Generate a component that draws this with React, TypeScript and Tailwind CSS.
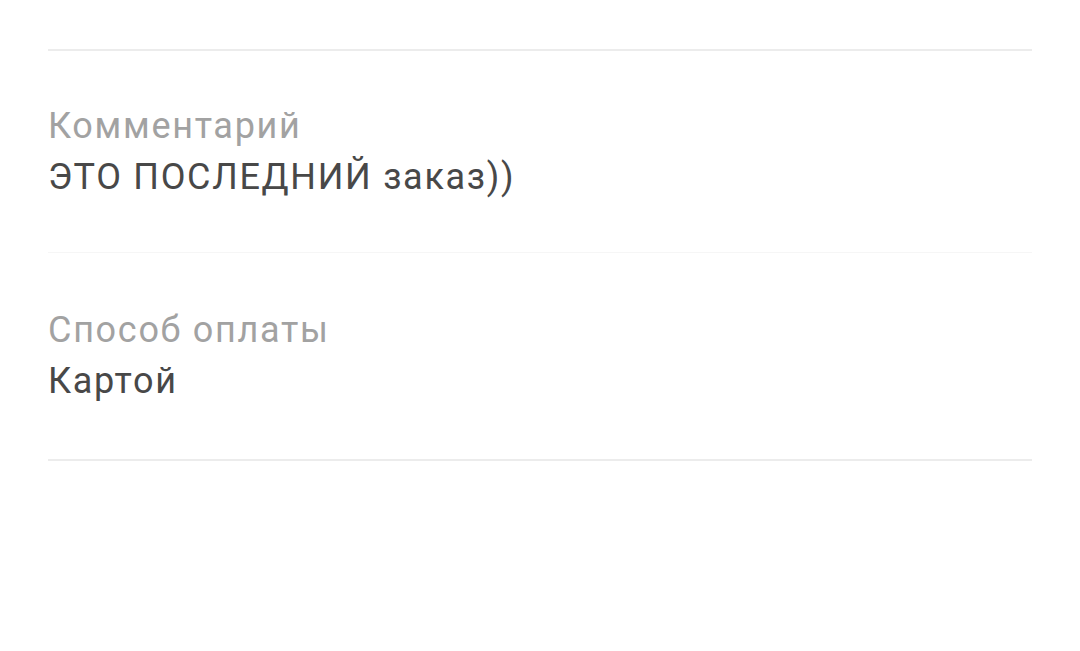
export default function App() {
  const font = { fontFamily: "Roboto, 'Noto Sans', sans-serif" };
  return (
    <div className="w-[1080px] h-[651px] bg-white overflow-hidden" style={font}>
      <div className="px-[48px] pt-[49px]">
        <div className="h-[2px] bg-[#ececec]" />
        <div className="pt-[50px] pb-[49px]">
          <div className="text-[36px] leading-[51px] tracking-[1.7px] text-[#a2a2a2]">Комментарий</div>
          <div className="text-[36px] leading-[51px] tracking-[1.7px] text-[#484848]">ЭТО ПОСЛЕДНИЙ заказ))</div>
        </div>
        <div className="h-[1px] bg-[#f6f6f6]" />
        <div className="pt-[52px] pb-[52px]">
          <div className="text-[36px] leading-[51px] tracking-[1.7px] text-[#a2a2a2]">Способ оплаты</div>
          <div className="text-[36px] leading-[51px] tracking-[1.7px] text-[#484848]">Картой</div>
        </div>
        <div className="h-[2px] bg-[#ececec]" />
      </div>
    </div>
  );
}
